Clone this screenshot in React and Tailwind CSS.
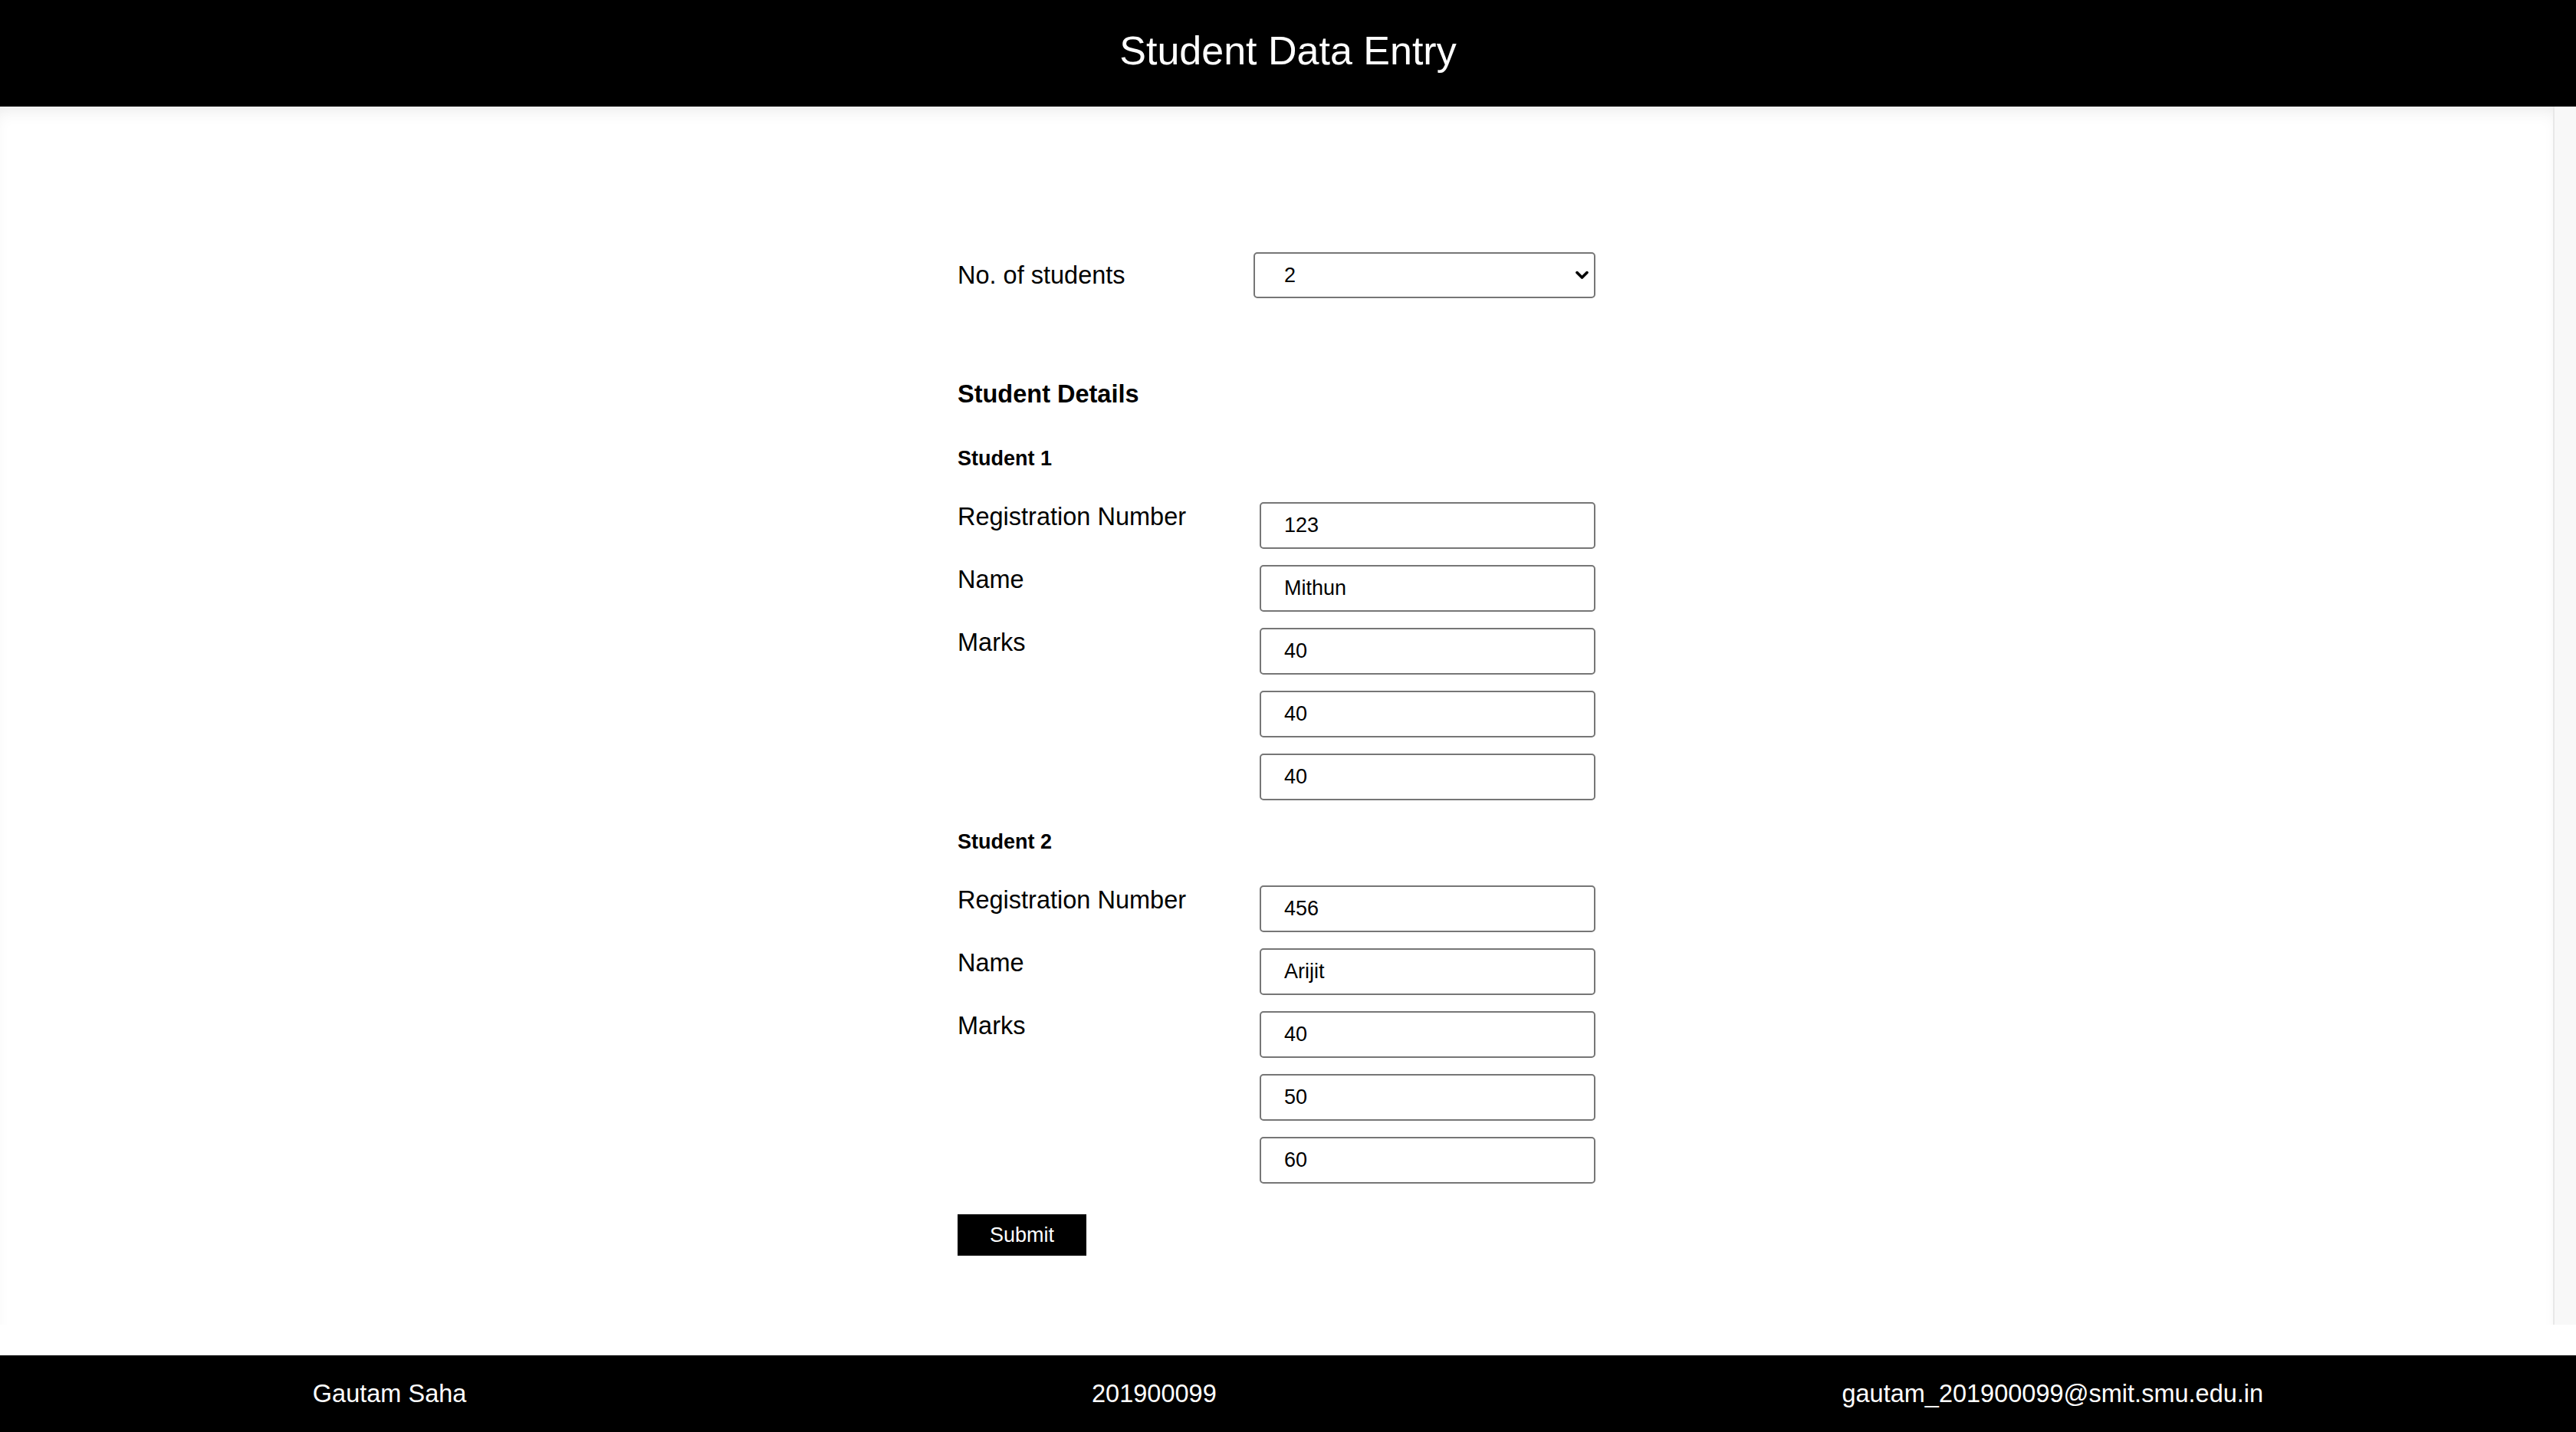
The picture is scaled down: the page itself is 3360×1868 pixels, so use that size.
import { useState } from 'react';

const students = [
  { reg: '123', name: 'Mithun', marks: ['40', '40', '40'] },
  { reg: '456', name: 'Arijit', marks: ['40', '50', '60'] },
];

function TextBox({ value }) {
  return (
    <input
      type="text"
      defaultValue={value}
      className="w-[438px] h-[61px] border-2 border-[#767676] rounded-[5px] bg-white pl-[30px] text-[27px] text-black outline-none"
    />
  );
}

function Row({ label, children }) {
  return (
    <div className="flex items-start">
      <label className="w-[394px] text-[32.5px] leading-[39px] text-black">{label}</label>
      <div className="flex flex-col gap-[21px]">{children}</div>
    </div>
  );
}

function StudentBlock({ index, student, first }) {
  return (
    <div className={first ? 'mt-[48px]' : 'mt-[38px]'}>
      <h5 className="text-[27px] leading-[32px] font-bold text-black">Student {index}</h5>
      <div className="mt-[41px] flex flex-col gap-[21px]">
        <Row label="Registration Number">
          <TextBox value={student.reg} />
        </Row>
        <Row label="Name">
          <TextBox value={student.name} />
        </Row>
        <Row label="Marks">
          {student.marks.map((m, i) => (
            <TextBox key={i} value={m} />
          ))}
        </Row>
      </div>
    </div>
  );
}

export default function App() {
  const [count, setCount] = useState('2');

  return (
    <div className="h-screen flex flex-col bg-white font-['Liberation_Sans',Arial,sans-serif]">
      <header className="h-[139px] shrink-0 bg-black flex items-center justify-center pb-2">
        <h1 className="text-[52px] leading-normal text-white">Student Data Entry</h1>
      </header>

      <main className="flex-1 min-h-0 mb-[40px] flex">
        <div className="flex-1 overflow-y-auto bg-white shadow-[inset_0_14px_26px_-14px_rgba(0,0,0,0.12)]">
          <form
            className="mx-auto w-[832px] pt-[190px] pb-[90px] flex flex-col"
            onSubmit={(e) => e.preventDefault()}
          >
            <div className="h-[60px] flex items-center">
              <label className="w-[386px] text-[32.5px] text-black">No. of students</label>
              <div className="relative">
                <select
                  value={count}
                  onChange={(e) => setCount(e.target.value)}
                  className="appearance-none w-[446px] h-[60px] border-2 border-[#767676] rounded-[5px] bg-white pl-[38px] text-[27px] text-black outline-none"
                >
                  <option value="1">1</option>
                  <option value="2">2</option>
                  <option value="3">3</option>
                </select>
                <svg
                  className="absolute right-[9px] top-1/2 -translate-y-1/2 pointer-events-none"
                  width="17"
                  height="11"
                  viewBox="0 0 17 11"
                  fill="none"
                  stroke="black"
                  strokeWidth="3.6"
                  strokeLinecap="round"
                  strokeLinejoin="round"
                >
                  <path d="M2 2l6.5 6.5L15 2" />
                </svg>
              </div>
            </div>

            <h4 className="mt-[105px] text-[32.5px] leading-[40px] font-bold text-black">Student Details</h4>

            {students.map((s, i) => (
              <StudentBlock key={i} index={i + 1} student={s} first={i === 0} />
            ))}

            <div className="mt-[40px]">
              <button
                type="submit"
                className="h-[54px] w-[168px] bg-black text-white text-[27px]"
              >
                Submit
              </button>
            </div>
          </form>
        </div>
        {/* scroll track */}
        <div className="w-[30px] shrink-0 bg-[#f8f8f8] border-l-2 border-[#e8e8e8]" />
      </main>

      <footer className="h-[100px] shrink-0 bg-black flex items-center justify-around text-white text-[32.5px]">
        <span>Gautam Saha</span>
        <span>201900099</span>
        <span>gautam_201900099@smit.smu.edu.in</span>
      </footer>
    </div>
  );
}
